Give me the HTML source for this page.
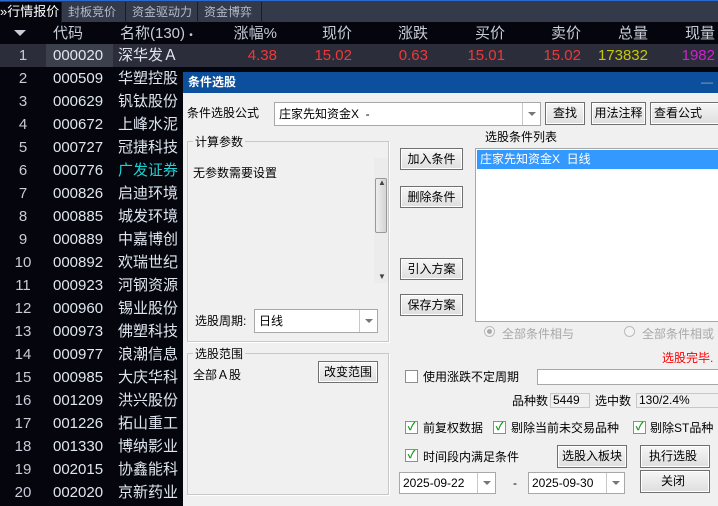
<!DOCTYPE html>
<html><head><meta charset="utf-8"><style>
*{margin:0;padding:0;box-sizing:border-box}
html,body{width:718px;height:506px;overflow:hidden}
body{background:#04050d;font-family:"Liberation Sans","Noto Sans CJK SC",sans-serif;position:relative;color:#e0e6f0}
.a{position:absolute;white-space:nowrap}
.tabs{position:absolute;left:0;top:0;width:718px;height:22px;background:#353a4a;border-top:1px solid #2a6ad0}
.tab{position:absolute;top:1px;height:21px;font-size:12px;line-height:20px;color:#b4bac8;border-right:1px solid #1a1d28;padding-left:6px;white-space:nowrap;overflow:hidden}
.row{position:absolute;left:0;width:718px;height:23px;font-size:15px;line-height:23px;white-space:nowrap}
.c{position:absolute;top:0;height:23px}
.r{text-align:right}
.dlg{position:absolute;left:183px;top:72px;width:540px;height:434px;background:#f0f0f0;color:#000;font-size:12px;overflow:hidden}
.dlg .a{font-size:12px;line-height:16px}
.btn{position:absolute;background:linear-gradient(#f6f6f6,#dedede);border:1px solid #707070;box-shadow:inset 0 0 0 1px #fff;text-align:center;font-size:12px;color:#000;white-space:nowrap}
.box{position:absolute;background:#fff;border:1px solid #a8a8a8}
.grp{position:absolute;border:1px solid #c8c8c8;box-shadow:1px 1px 0 #fff}
.cb{position:absolute;width:13px;height:13px;border:1px solid #8e8e8e;background:#fff;font-size:11px;line-height:11px;color:#1a9a1a;text-align:center;font-weight:bold}
.dd{position:absolute;right:0;top:0;bottom:0;width:18px;border-left:1px solid #c8c8c8}
.dd:after{content:"";position:absolute;left:5px;top:50%;margin-top:-2px;border:4px solid transparent;border-top:4px solid #777}
</style></head><body>
<div class="tabs">
<div class="tab" style="left:0;width:62px;padding-left:0;background:#04050d;color:#fff;font-size:13px">»行情报价</div>
<div class="tab" style="left:62px;width:64px">封板竞价</div>
<div class="tab" style="left:126px;width:72px">资金驱动力</div>
<div class="tab" style="left:198px;width:64px">资金博弈</div>
</div>
<div class="row" style="top:22px;height:22px;color:#c8ccd8">
<div class="c" style="left:14px;top:8px;width:0;height:0;border:6px solid transparent;border-top:6px solid #c8ccd8;border-bottom:0"></div>
<div class="c" style="left:53px">代码</div>
<div class="c" style="left:120px">名称(130) <span style="font-size:10px">•</span></div>
<div class="c r" style="left:204px;width:73px">涨幅%</div>
<div class="c r" style="left:281px;width:71px">现价</div>
<div class="c r" style="left:355px;width:73px">涨跌</div>
<div class="c r" style="left:432px;width:73px">买价</div>
<div class="c r" style="left:508px;width:73px">卖价</div>
<div class="c r" style="left:584px;width:64px">总量</div>
<div class="c r" style="left:652px;width:63px">现量</div>
</div>
<div class="row" style="top:44px;background:#2b2e3a">
<div class="c" style="left:0;width:46px;text-align:center;color:#c8ccd8">1</div>
<div class="c" style="left:46px;width:67px;background:#3c404c;padding-left:7px">000020</div>
<div class="c" style="left:113px;padding-left:5px">深华发Ａ</div>
<div class="c r" style="left:204px;width:73px;color:#f03838">4.38</div>
<div class="c r" style="left:281px;width:71px;color:#f03838">15.02</div>
<div class="c r" style="left:355px;width:73px;color:#f03838">0.63</div>
<div class="c r" style="left:432px;width:73px;color:#f03838">15.01</div>
<div class="c r" style="left:508px;width:73px;color:#f03838">15.02</div>
<div class="c r" style="left:584px;width:64px;color:#c8c800">173832</div>
<div class="c r" style="left:652px;width:63px;color:#d020d0">1982</div>
</div>
<div id="rows"></div>
<script>
var d=[["000509","华塑控股"],["000629","钒钛股份"],["000672","上峰水泥"],["000727","冠捷科技"],["000776","广发证券"],["000826","启迪环境"],["000885","城发环境"],["000889","中嘉博创"],["000892","欢瑞世纪"],["000923","河钢资源"],["000960","锡业股份"],["000973","佛塑科技"],["000977","浪潮信息"],["000985","大庆华科"],["001209","洪兴股份"],["001226","拓山重工"],["001330","博纳影业"],["002015","协鑫能科"],["002020","京新药业"]];
var h="";for(var i=0;i<d.length;i++){var t=67+i*23;h+='<div class="row" style="top:'+t+'px"><div class="c" style="left:0;width:46px;text-align:center;color:#c8ccd8">'+(i+2)+'</div><div class="c" style="left:53px">'+d[i][0]+'</div><div class="c" style="left:118px;'+(i==4?'color:#20d0d0':'')+'">'+d[i][1]+'</div></div>';}
document.getElementById("rows").innerHTML=h;
</script>
<div class="dlg">
<div class="a" style="left:0;top:0;width:540px;height:21px;background:#0c4f9c;color:#fff;font-weight:bold;padding-left:5px;line-height:21px">条件选股<span style="position:absolute;left:518px;font-weight:normal;color:#9ab">—</span></div>
<div class="a" style="left:4px;top:33px">条件选股公式</div>
<div class="box" style="left:91px;top:30px;width:267px;height:24px"><div class="a" style="left:4px;top:3px">庄家先知资金X&nbsp; -</div><div class="dd"></div></div>
<div class="btn" style="left:362px;top:30px;width:40px;height:23px;line-height:21px">查找</div>
<div class="btn" style="left:408px;top:30px;width:55px;height:23px;line-height:21px">用法注释</div>
<div class="btn" style="left:467px;top:30px;width:70px;height:23px;line-height:21px;text-align:left;padding-left:3px">查看公式</div>
<div class="grp" style="left:4px;top:69px;width:202px;height:201px"></div>
<div class="a" style="left:10px;top:62px;background:#f0f0f0;padding:0 2px">计算参数</div>
<div class="a" style="left:10px;top:93px">无参数需要设置</div>
<div class="a" style="left:191px;top:86px;width:14px;height:125px;background:#ececec"></div>
<div class="a" style="left:192px;top:106px;width:12px;height:55px;background:linear-gradient(90deg,#eee,#d4d4d4);border:1px solid #999;border-radius:2px"></div>
<div class="a" style="left:195px;top:103px;font-size:8px;color:#444">▲</div>
<div class="a" style="left:195px;top:197px;font-size:8px;color:#444">▼</div>
<div class="a" style="left:12px;top:241px">选股周期:</div>
<div class="box" style="left:71px;top:237px;width:124px;height:24px"><div class="a" style="left:4px;top:3px">日线</div><div class="dd"></div></div>
<div class="grp" style="left:4px;top:281px;width:202px;height:142px"></div>
<div class="a" style="left:10px;top:274px;background:#f0f0f0;padding:0 2px">选股范围</div>
<div class="a" style="left:10px;top:295px">全部Ａ股</div>
<div class="btn" style="left:135px;top:289px;width:60px;height:22px;line-height:20px">改变范围</div>
<div class="btn" style="left:217px;top:76px;width:63px;height:22px;line-height:20px">加入条件</div>
<div class="btn" style="left:217px;top:114px;width:63px;height:22px;line-height:20px">删除条件</div>
<div class="btn" style="left:217px;top:186px;width:63px;height:22px;line-height:20px">引入方案</div>
<div class="btn" style="left:217px;top:222px;width:63px;height:22px;line-height:20px">保存方案</div>
<div class="a" style="left:302px;top:57px">选股条件列表</div>
<div class="box" style="left:292px;top:76px;width:250px;height:174px"><div class="a" style="left:1px;top:1px;width:248px;height:19px;background:#3399ff;color:#fff;padding-left:3px;line-height:19px">庄家先知资金X&nbsp; 日线</div></div>
<div class="a" style="left:301px;top:254px;width:11px;height:11px;border-radius:50%;border:1px solid #bbb;background:#f4f4f4"><div style="margin:2px;width:5px;height:5px;border-radius:50%;background:#aaa"></div></div>
<div class="a" style="left:319px;top:254px;color:#a8a8a8">全部条件相与</div>
<div class="a" style="left:441px;top:254px;width:11px;height:11px;border-radius:50%;border:1px solid #bbb;background:#f4f4f4"></div>
<div class="a" style="left:459px;top:254px;color:#a8a8a8">全部条件相或</div>
<div class="a" style="left:479px;top:278px;color:#f00">选股完毕.</div>
<div class="cb" style="left:222px;top:298px"></div>
<div class="a" style="left:240px;top:297px">使用涨跌不定周期</div>
<div class="box" style="left:354px;top:297px;width:190px;height:16px"></div>
<div class="a" style="left:329px;top:321px">品种数</div>
<div class="a" style="left:367px;top:321px;width:40px;height:15px;border:1px solid #c8c8c8;padding-left:2px;line-height:13px">5449</div>
<div class="a" style="left:412px;top:321px">选中数</div>
<div class="a" style="left:453px;top:321px;width:90px;height:15px;border:1px solid #c8c8c8;padding-left:2px;line-height:13px">130/2.4%</div>
<div class="cb" style="left:222px;top:349px">✓</div>
<div class="a" style="left:240px;top:348px">前复权数据</div>
<div class="cb" style="left:310px;top:349px">✓</div>
<div class="a" style="left:328px;top:348px">剔除当前未交易品种</div>
<div class="cb" style="left:450px;top:349px">✓</div>
<div class="a" style="left:467px;top:348px">剔除ST品种</div>
<div class="cb" style="left:222px;top:377px">✓</div>
<div class="a" style="left:240px;top:377px">时间段内满足条件</div>
<div class="btn" style="left:374px;top:373px;width:70px;height:23px;line-height:21px">选股入板块</div>
<div class="btn" style="left:457px;top:373px;width:70px;height:23px;line-height:21px;text-align:left;padding-left:8px">执行选股</div>
<div class="box" style="left:216px;top:400px;width:97px;height:22px"><div class="a" style="left:3px;top:2px">2025-09-22</div><div class="dd"></div></div>
<div class="a" style="left:330px;top:403px">-</div>
<div class="box" style="left:345px;top:400px;width:97px;height:22px"><div class="a" style="left:3px;top:2px">2025-09-30</div><div class="dd"></div></div>
<div class="btn" style="left:457px;top:398px;width:70px;height:23px;line-height:21px;text-align:left;padding-left:20px">关闭</div>
</div>
</body></html>
